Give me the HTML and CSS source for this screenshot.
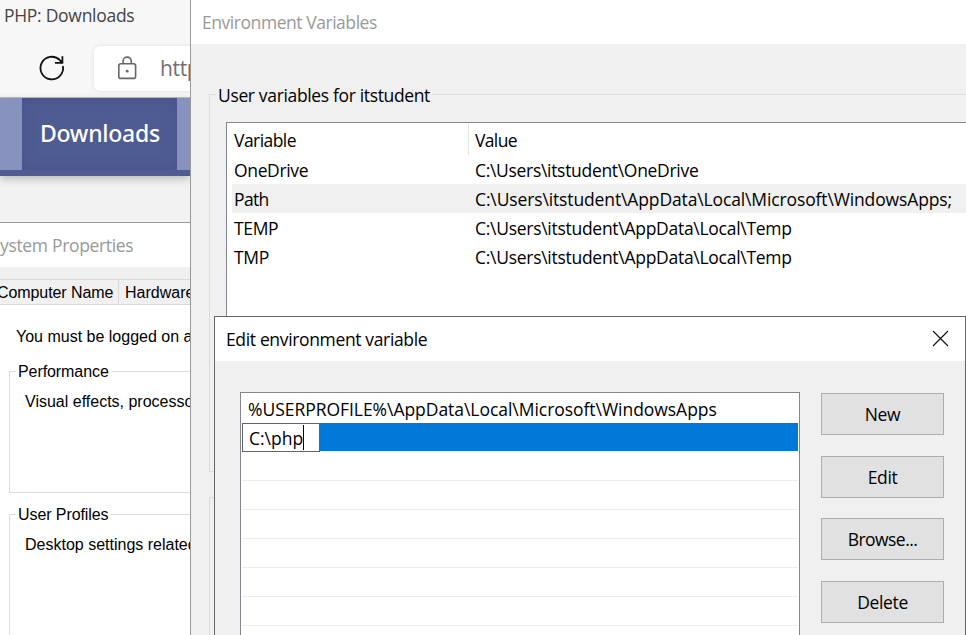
FILE: index.html
```html
<!DOCTYPE html>
<html lang="en">
<head>
<meta charset="utf-8">
<title>Environment Variables</title>
<link rel="stylesheet" href="styles.css">
</head>
<body>
<div class="desktop">
  <section class="browser">
    <div class="tab-title"><span class="t-tab">PHP: Downloads</span></div>
    <div class="toolbar">
      <svg class="reload" width="28" height="28" viewBox="0 0 28 28" fill="none" stroke="#111" stroke-width="1.8"><path d="M24.9 12A11.3 11.3 0 1 1 21.8 6.1L24 8.7M24.4 2.2V8.8H17"/></svg>
      <div class="address">
        <svg class="lock" width="20" height="24" viewBox="0 0 20 24" fill="none" stroke="#666" stroke-width="1.6"><rect x="1.8" y="7.8" width="16.8" height="14.6" rx="2"/><path d="M6.1 7.5V5.2a4.1 4.1 0 0 1 8.2 0V7.5"/><circle cx="10.2" cy="15.2" r="1.4" fill="#666" stroke="none"/></svg>
        <span>http</span>
      </div>
    </div>
    <nav class="php-nav"><span class="nav-active"><span class="t-nav">Downloads</span></span></nav>
  </section>

  <section class="sysprops">
    <header><span class="t-sys">ystem Properties</span></header>
    <div class="tabs"><span class="tab tab-first">Computer Name</span><span class="tab tab-hw">Hardware</span></div>
    <div class="sheet">
      <p class="notice">You must be logged on as</p>
      <div class="group perf"><div class="legend">Performance</div><p>Visual effects, processor</p></div>
      <div class="group prof"><div class="legend">User Profiles</div><p>Desktop settings related</p></div>
    </div>
  </section>

  <section class="envvars">
    <header><span class="t-env">Environment Variables</span></header>
    <div class="group uservars">
      <div class="legend"><span class="t-legend">User variables for itstudent</span></div>
      <div class="list">
        <div class="row head"><span class="c1 t-variable">Variable</span><span class="c2 t-value">Value</span></div>
        <div class="row"><span class="c1">OneDrive</span><span class="c2 t-one">C:\Users\itstudent\OneDrive</span></div>
        <div class="row selected"><span class="c1 t-name">Path</span><span class="c2 t-path">C:\Users\itstudent\AppData\Local\Microsoft\WindowsApps;</span></div>
        <div class="row"><span class="c1">TEMP</span><span class="c2 t-temp">C:\Users\itstudent\AppData\Local\Temp</span></div>
        <div class="row"><span class="c1">TMP</span><span class="c2 t-temp">C:\Users\itstudent\AppData\Local\Temp</span></div>
      </div>
    </div>
    <div class="group sysvars"></div>
  </section>

  <section class="dialog">
    <header><span class="t-edit">Edit environment variable</span>
      <svg width="17" height="17" viewBox="0 0 17 17" stroke="#111" stroke-width="1.2"><path d="M1 1L16 16M16 1L1 16"/></svg>
    </header>
    <div class="dialog-body">
      <div class="paths">
        <div class="item first"><span class="t-profile">%USERPROFILE%\AppData\Local\Microsoft\WindowsApps</span></div>
        <div class="item active"><div class="editor"><span class="t-php">C:\php</span><i></i></div></div>
        <div class="item"></div><div class="item"></div><div class="item"></div><div class="item"></div><div class="item"></div><div class="item"></div><div class="item"></div>
      </div>
      <div class="buttons">
        <button>New</button><button>Edit</button><button class="t-browse">Browse...</button><button>Delete</button>
      </div>
    </div>
  </section>
</div>
</body>
</html>
```
FILE: styles.css
```css
* { box-sizing: border-box; }
body { margin: 0; background: #f2f2f2; }
p { margin: 0; }
.desktop {
  position: relative; width: 966px; height: 635px; overflow: hidden;
  font: 17.5px "Open Sans", sans-serif; letter-spacing: -0.35px; color: #000; white-space: nowrap;
}
section { position: absolute; overflow: hidden; }
header { background: #fff; display: flex; align-items: center; }

.browser { left: 0; top: 0; width: 190px; height: 222px; background: #f2f2f2; }
.tab-title { height: 46px; padding: 3px 0 0 4px; line-height: 24px; color: #444; background: #f7f7f7; letter-spacing: -0.28px; }
.toolbar { height: 52px; display: flex; background: #f7f7f7; border-bottom: 1px solid #b4b4b4; }
.reload { margin: 8px 0 0 38px; flex: none; }
.address {
  margin-left: 28px; width: 160px; height: 45px; flex: none; background: #fff; border-radius: 6px;
  box-shadow: 0 0 4px #ddd; display: flex; align-items: center; padding-left: 23px; color: #707070; font-size: 21px;
}
.address svg { margin-top: -1px; }
.address span { margin: -2px 0 0 23px; }
.php-nav {
  height: 78px; background: #8892bf; border-bottom: 6px solid #4f5b93; padding-left: 22px;
  box-shadow: 0 3px 8px #bbb;
}
.nav-active {
  display: block; width: 155px; height: 72px; background: #4f5b93; padding-left: 18px;
  box-shadow: inset 0 0 12px #48528a; font: 500 23px/70px "Noto Sans", sans-serif; letter-spacing: -0.27px; color: #fff;
}

.sysprops {
  left: 0; top: 222px; width: 190px; height: 413px; background: #f0f0f0; border-top: 1px solid #999;
  font: 16px "Liberation Sans", sans-serif; letter-spacing: 0;
}
.sysprops header { height: 44px; color: #999; font: 17.5px "Open Sans", sans-serif; letter-spacing: -0.33px; }
.tabs { margin-top: 12px; height: 26px; display: flex; border: solid #d9d9d9; border-width: 1px 0; line-height: 25px; }
.tab { flex: none; }
.tab-first { width: 119px; border-right: 1px solid #d9d9d9; text-indent: -3px; letter-spacing: -0.08px; }
.tab-hw { padding-left: 6px; }
.sheet { height: 331px; background: #fff; overflow: hidden; }
.notice { padding: 22px 0 0 16px; line-height: 20px; }
.group { border: 1px solid #dcdcdc; }
.legend { width: max-content; }
.sheet .group { margin-left: 9px; width: 200px; height: 122px; }
.sheet .legend { margin: -10px 0 0 6px; padding: 0 2px; background: #fff; line-height: 20px; letter-spacing: -0.08px; }
.sheet .group p { padding: 10px 0 0 15px; line-height: 20px; }
.sheet .perf { margin-top: 24px; }
.sheet .prof { margin-top: 21px; height: 160px; }

.envvars { left: 190px; top: 0; width: 776px; height: 635px; background: #f0f0f0; border-left: 1px solid #999; }
.envvars header { height: 44px; padding-left: 11px; color: #999; letter-spacing: -0.45px; }
.envvars .group { margin-left: 18px; width: 800px; }
.uservars { margin-top: 50px; height: 378px; }
.uservars .legend { margin: -13px 0 0 6px; padding: 0 2px; height: 26px; line-height: 26px; background: #f0f0f0; }
.list { margin: 14px 0 0 16px; height: 330px; background: #fff; border: 1px solid #828790; }
.row { height: 29px; line-height: 31px; display: flex; margin-left: 5px; }
.c1 { width: 236px; padding-left: 2px; }
.c2 { padding-left: 7px; }
.head { height: 32px; line-height: 34px; }
.head .c2 { border-left: 1px solid #e3e3e3; padding-left: 6px; height: 31px; margin-top: 1px; line-height: 32px; }
.selected { background: #f0f0f0; }
.sysvars { margin-top: 25px; height: 200px; }
.t-variable { letter-spacing: -0.55px; }
.t-value, .t-name { letter-spacing: -0.65px; }
.t-one { letter-spacing: -0.31px; }
.t-path { letter-spacing: -0.13px; }
.t-temp { letter-spacing: -0.28px; }
.t-profile { letter-spacing: -0.04px; }
.t-php { letter-spacing: 0; }

.dialog { left: 214px; top: 316px; width: 752px; height: 340px; background: #f0f0f0; border: 1px solid #666; }
.dialog header { height: 44px; padding: 0 16px 0 11px; justify-content: space-between; }
.dialog header svg { margin-top: -1px; }
.dialog-body { display: flex; padding: 31px 0 0 25px; }
.paths { width: 560px; height: 280px; background: #fff; border: 1px solid #828790; padding: 1px 1px 0; flex: none; }
.item { height: 29px; border-bottom: 1px solid #ededed; line-height: 30px; }
.first { padding-left: 6px; border-color: #fff; }
.active { background: #0078d7; border-bottom-color: #fff; background-clip: padding-box; }
.editor { width: 78px; height: 29px; background: #fff; border: 1px solid #646464; padding-left: 6px; display: flex; align-items: center; }
.editor i { width: 1px; height: 25px; background: #000; }
.buttons { margin: 1px 0 0 21px; display: flex; flex-direction: column; gap: 20.7px; }
button { width: 123px; height: 42px; padding: 0; border: 1px solid #adadad; background: #e1e1e1; font: inherit; letter-spacing: inherit; color: #000; }
.t-browse { letter-spacing: -0.55px; }
```
